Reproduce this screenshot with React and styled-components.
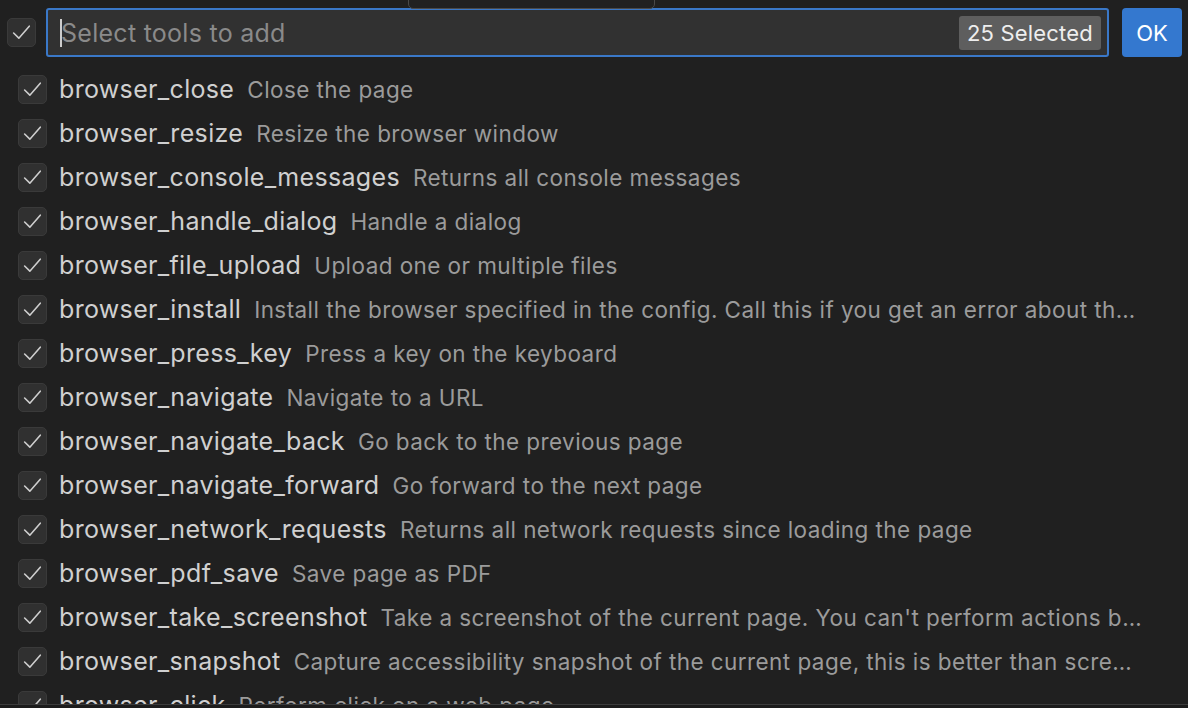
import React from "react";
import styled, { createGlobalStyle } from "styled-components";

const Global = createGlobalStyle`
  html, body { margin: 0; padding: 0; background: #202020; overflow: hidden; height: 100%; }
  body { font-family: Inter, "Open Sans", "Liberation Sans", sans-serif; -webkit-font-smoothing: antialiased; }
`;

const Page = styled.div`
  width: 1188px;
  height: 708px;
  position: relative;
  overflow: hidden;
  background: #202020;
`;

const Header = styled.div`
  display: flex;
  align-items: center;
  padding: 8px 6px 0 7px;
  height: 49px;
`;

const Box = styled.div`
  flex: none;
  box-sizing: border-box;
  width: ${(p) => p.$size}px;
  height: ${(p) => p.$size}px;
  border-radius: 5px;
  background: #303030;
  border: 1px solid #3a3a3a;
  display: flex;
  align-items: center;
  justify-content: center;
`;

const Input = styled.div`
  flex: 1;
  margin-left: 10px;
  height: 49px;
  box-sizing: border-box;
  border: 2px solid #3a78c8;
  border-radius: 3px;
  background: #313131;
  display: flex;
  align-items: center;
  padding: 0 6px 0 12px;
`;

const Caret = styled.span`
  width: 2px;
  height: 28px;
  background: #cccccc;
  margin-right: -1px;
`;

const Placeholder = styled.span`
  flex: 1;
  color: #8a8a8a;
  font-size: 25px;
  letter-spacing: 0.27px;
`;

const Badge = styled.span`
  background: #5e5e5e;
  color: #eeeeee;
  font-size: 22px;
  letter-spacing: 0.2px;
  border-radius: 3px;
  height: 34px;
  padding: 0 8px;
  display: flex;
  align-items: center;
`;

const OkButton = styled.button`
  margin-left: 13px;
  width: 60px;
  height: 49px;
  border: none;
  border-radius: 4px;
  background: #3478cf;
  color: #ffffff;
  font-family: inherit;
  font-size: 22px;
  padding: 0;
`;

const List = styled.div`
  display: flex;
  flex-direction: column;
  padding-top: 10px;
`;

const Row = styled.div`
  display: flex;
  align-items: center;
  height: 44px;
  padding: 0 44px 0 18px;
  white-space: nowrap;
`;

const Name = styled.span`
  flex: none;
  margin-left: 12px;
  color: #d0d0d0;
  font-size: 25px;
  letter-spacing: 0.33px;
`;

const Desc = styled.span`
  flex: 1;
  min-width: 0;
  margin-left: 13px;
  color: #9b9b9b;
  font-size: 22.5px;
  letter-spacing: 0.43px;
  overflow: hidden;
  text-overflow: ellipsis;
`;

const TopTab = styled.div`
  position: absolute;
  left: 408px;
  top: -10px;
  width: 247px;
  height: 19px;
  box-sizing: border-box;
  border: 1px solid #4a4a4a;
  border-radius: 0 0 5px 5px;
  background: #212121;
`;

const BottomStrip = styled.div`
  position: absolute;
  left: 0;
  right: 0;
  top: 704px;
  height: 4px;
  border-top: 1px solid #3c3c3c;
  background: #1c1c1c;
`;

const Check = ({ size }) => (
  <svg width={size * 0.72} height={size * 0.72} viewBox="0 0 20 20" fill="none">
    <path d="M2.5 10.5 L7.5 15.5 L17.5 4" stroke="#cfcfcf" strokeWidth="1.5" strokeLinecap="round" strokeLinejoin="round" />
  </svg>
);

const tools = [
  ["browser_close", "Close the page"],
  ["browser_resize", "Resize the browser window"],
  ["browser_console_messages", "Returns all console messages"],
  ["browser_handle_dialog", "Handle a dialog"],
  ["browser_file_upload", "Upload one or multiple files"],
  ["browser_install", "Install the browser specified in the config. Call this if you get an error about the browser not being installed."],
  ["browser_press_key", "Press a key on the keyboard"],
  ["browser_navigate", "Navigate to a URL"],
  ["browser_navigate_back", "Go back to the previous page"],
  ["browser_navigate_forward", "Go forward to the next page"],
  ["browser_network_requests", "Returns all network requests since loading the page"],
  ["browser_pdf_save", "Save page as PDF"],
  ["browser_take_screenshot", "Take a screenshot of the current page. You can't perform actions based on the screenshot, use browser_snapshot for actions."],
  ["browser_snapshot", "Capture accessibility snapshot of the current page, this is better than screenshot"],
  ["browser_click", "Perform click on a web page"],
];

export default function App() {
  return (
    <Page>
      <Global />
      <Header>
        <Box $size={29}>
          <Check size={29} />
        </Box>
        <Input>
          <Caret />
          <Placeholder>Select tools to add</Placeholder>
          <Badge>25 Selected</Badge>
        </Input>
        <OkButton>OK</OkButton>
      </Header>
      <List>
        {tools.map(([name, desc]) => (
          <Row key={name}>
            <Box $size={29}>
              <Check size={29} />
            </Box>
            <Name>{name}</Name>
            <Desc>{desc}</Desc>
          </Row>
        ))}
      </List>
      <TopTab />
      <BottomStrip />
    </Page>
  );
}
